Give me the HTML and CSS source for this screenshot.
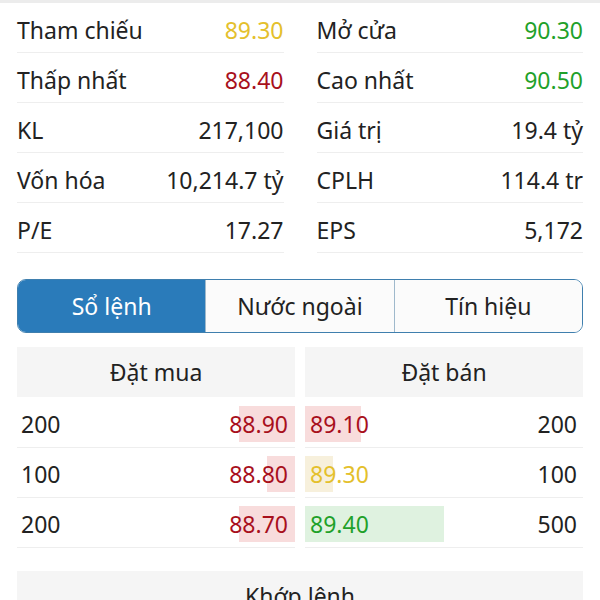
FILE: index.html
```html
<!DOCTYPE html>
<html lang="vi">
<head>
    <meta charset="UTF-8">
    <meta name="viewport" content="width=device-width, initial-scale=1.0">
    <title>Chi tiết cổ phiếu</title>
    <link rel="stylesheet" href="styles.css">
</head>
<body>
    <div class="top-strip"></div>
    <div class="stats">
        <div class="stat-row"><span>Tham chiếu</span><span class="ref">89.30</span></div>
        <div class="stat-row"><span>Mở cửa</span><span class="up">90.30</span></div>
        <div class="stat-row"><span>Thấp nhất</span><span class="down">88.40</span></div>
        <div class="stat-row"><span>Cao nhất</span><span class="up">90.50</span></div>
        <div class="stat-row"><span>KL</span><span>217,100</span></div>
        <div class="stat-row"><span>Giá trị</span><span>19.4 tỷ</span></div>
        <div class="stat-row"><span>Vốn hóa</span><span>10,214.7 tỷ</span></div>
        <div class="stat-row"><span>CPLH</span><span>114.4 tr</span></div>
        <div class="stat-row"><span>P/E</span><span>17.27</span></div>
        <div class="stat-row"><span>EPS</span><span>5,172</span></div>
    </div>

    <div class="tabs">
        <div class="tab active">Sổ lệnh</div>
        <div class="tab">Nước ngoài</div>
        <div class="tab">Tín hiệu</div>
    </div>

    <div class="book">
        <div class="book-head">Đặt mua</div>
        <div class="book-head">Đặt bán</div>

        <div class="book-cell buy">
            <span>200</span>
            <span class="price down"><i class="bar bar-down" style="width: 20%"></i>88.90</span>
        </div>
        <div class="book-cell sell">
            <span class="price down"><i class="bar bar-down" style="width: 20%"></i>89.10</span>
            <span>200</span>
        </div>

        <div class="book-cell buy">
            <span>100</span>
            <span class="price down"><i class="bar bar-down" style="width: 10%"></i>88.80</span>
        </div>
        <div class="book-cell sell">
            <span class="price ref"><i class="bar bar-ref" style="width: 10%"></i>89.30</span>
            <span>100</span>
        </div>

        <div class="book-cell buy">
            <span>200</span>
            <span class="price down"><i class="bar bar-down" style="width: 20%"></i>88.70</span>
        </div>
        <div class="book-cell sell">
            <span class="price up"><i class="bar bar-up" style="width: 50%"></i>89.40</span>
            <span>500</span>
        </div>
    </div>

    <div class="matched">Khớp lệnh</div>
</body>
</html>
```

FILE: styles.css
```css
body {
    font-family: 'Noto Sans', 'Open Sans', sans-serif;
    margin: 0;
    padding: 0;
    background-color: #fff;
    color: #222;
    font-size: 23px;
}
.top-strip {
    height: 3px;
    background-color: #ececec;
}
.stats {
    display: grid;
    grid-template-columns: 1fr 1fr;
    column-gap: 33px;
    padding: 0 17px;
}
.stat-row {
    display: flex;
    justify-content: space-between;
    align-items: center;
    height: 50px;
    padding-top: 4px;
    box-sizing: border-box;
    border-bottom: 1px solid #eeeeee;
}
.ref {
    color: #e4c02c; /* Yellow */
}
.up {
    color: #1fa12a; /* Green */
}
.down {
    color: #a8101c; /* Dark red */
}
.tabs {
    display: flex;
    margin: 26px 17px 0;
    height: 54px;
    box-sizing: border-box;
    border: 1.5px solid #3f7fae;
    border-radius: 9px;
    overflow: hidden;
}
.tab {
    flex: 1;
    display: flex;
    align-items: center;
    justify-content: center;
    background-color: #fbfbfb;
    border-left: 1px solid #9fb9cc;
}
.tab:first-child {
    border-left: none;
}
.tab.active {
    background-color: #2a7bba;
    color: #fff;
}
.book {
    display: grid;
    grid-template-columns: 1fr 1fr;
    column-gap: 10px;
    margin: 14px 17px 0;
}
.book-head {
    height: 50px;
    display: flex;
    align-items: center;
    justify-content: center;
    background-color: #f5f5f5;
    margin-bottom: 1px;
}
.book-cell {
    position: relative;
    display: flex;
    justify-content: space-between;
    align-items: center;
    height: 50px;
    padding-top: 3px;
    box-sizing: border-box;
    border-bottom: 1px solid #eeeeee;
}
.book-cell.buy {
    padding-left: 4px;
}
.book-cell.sell {
    padding-right: 6px;
}
.price {
    z-index: 0;
}
.buy .price {
    padding-right: 7px;
}
.sell .price {
    padding-left: 5px;
}
.bar {
    position: absolute;
    top: 8px;
    bottom: 5px;
    z-index: -1;
}
.buy .bar {
    right: 0;
}
.sell .bar {
    left: 0;
}
.bar-down {
    background-color: #f8dcdc;
}
.bar-ref {
    background-color: #f7f0dc;
}
.bar-up {
    background-color: #dff2e0;
}
.matched {
    margin: 23px 17px 0;
    height: 60px;
    padding-top: 9px;
    text-align: center;
    background-color: #f5f5f5;
}
```
